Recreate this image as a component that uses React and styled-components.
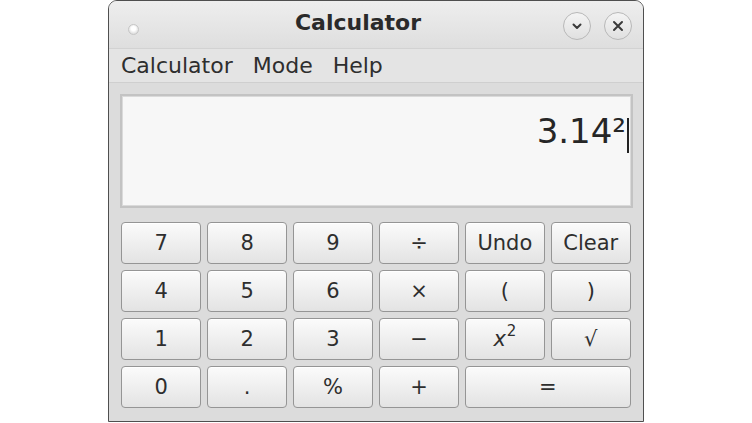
import React from "react";
import styled, { createGlobalStyle } from "styled-components";

const GlobalStyle = createGlobalStyle`
  html, body {
    margin: 0;
    padding: 0;
    background: #ffffff;
  }
  body {
    font-family: "DejaVu Sans", "Liberation Sans", sans-serif;
    color: #2e2e2e;
  }
`;

const KEYS = [
  { label: "7" },
  { label: "8" },
  { label: "9" },
  { label: "÷" },
  { label: "Undo" },
  { label: "Clear" },
  { label: "4" },
  { label: "5" },
  { label: "6" },
  { label: "×" },
  { label: "(" },
  { label: ")" },
  { label: "1" },
  { label: "2" },
  { label: "3" },
  { label: "−" },
  { label: "square" },
  { label: "√" },
  { label: "0" },
  { label: "." },
  { label: "%" },
  { label: "+" },
  { label: "=", wide: true },
];

const App = () => {
  return (
    <Page>
      <GlobalStyle />
      <Window>
        <TitleBar>
          <TitleLeft>
            <Dot />
          </TitleLeft>
          <Title>Calculator</Title>
          <TitleRight>
            <RoundButton aria-label="minimize">
              <svg width="14" height="14" viewBox="0 0 14 14">
                <path d="M3.5 5.5 L7 9 L10.5 5.5" fill="none" stroke="#3a3a3a" strokeWidth="2" strokeLinecap="round" strokeLinejoin="round" />
              </svg>
            </RoundButton>
            <RoundButton aria-label="close">
              <svg width="14" height="14" viewBox="0 0 14 14">
                <path d="M3 3 L11 11 M11 3 L3 11" fill="none" stroke="#3a3a3a" strokeWidth="2" strokeLinecap="round" />
              </svg>
            </RoundButton>
          </TitleRight>
        </TitleBar>

        <MenuBar>
          <MenuItem>Calculator</MenuItem>
          <MenuItem>Mode</MenuItem>
          <MenuItem>Help</MenuItem>
        </MenuBar>

        <Body>
          <Display>
            <Value>3.14²</Value>
            <Cursor />
          </Display>

          <Keypad>
            {KEYS.map((k, i) => (
              <Key key={i} $wide={k.wide}>
                {k.label === "square" ? (
                  <>
                    <Italic>x</Italic>
                    <Sup>2</Sup>
                  </>
                ) : (
                  k.label
                )}
              </Key>
            ))}
          </Keypad>
        </Body>
      </Window>
    </Page>
  );
};

const Page = styled.div`
  display: flex;
  justify-content: center;
  width: 752px;
  height: 423px;
  overflow: hidden;
`;

const Window = styled.div`
  width: 536px;
  height: 422px;
  box-sizing: border-box;
  border: 1px solid #4f4f4f;
  border-radius: 9px 9px 0 0;
  background: #dcdcdc;
  display: flex;
  flex-direction: column;
  overflow: hidden;
`;

const TitleBar = styled.div`
  height: 47px;
  flex-shrink: 0;
  display: flex;
  align-items: center;
  background: linear-gradient(#eeeeee, #dedede);
`;

const TitleLeft = styled.div`
  width: 43px;
  display: flex;
  padding-left: 19px;
  padding-top: 10px;
  box-sizing: border-box;
`;

const Dot = styled.div`
  width: 11px;
  height: 11px;
  border-radius: 50%;
  background: radial-gradient(circle at 50% 40%, #ffffff 30%, #dadada 80%);
  border: 1px solid #c6c6c6;
  box-sizing: border-box;
`;

const Title = styled.div`
  flex: 1;
  text-align: center;
  font-size: 22px;
  font-weight: bold;
  color: #2a2a2a;
  margin-top: -4px;
`;

const TitleRight = styled.div`
  width: 80px;
  display: flex;
  gap: 13px;
  margin-left: -1px;
  padding-top: 2px;
`;

const RoundButton = styled.div`
  width: 28px;
  height: 28px;
  box-sizing: border-box;
  border-radius: 50%;
  border: 1px solid #b8b8b8;
  background: linear-gradient(#f4f4f4, #e0e0e0);
  display: flex;
  align-items: center;
  justify-content: center;
`;

const MenuBar = styled.div`
  height: 35px;
  flex-shrink: 0;
  display: flex;
  align-items: center;
  padding-left: 2px;
  background: #e4e4e4;
  border-top: 1px solid #d2d2d2;
  border-bottom: 1px solid #cfcfcf;
  box-sizing: border-box;
`;

const MenuItem = styled.div`
  font-size: 22px;
  padding: 0 10px;
  color: #2e2e2e;
`;

const Body = styled.div`
  flex: 1;
  padding: 11px 10px 13px 11px;
  display: flex;
  flex-direction: column;
`;

const Display = styled.div`
  height: 114px;
  box-sizing: border-box;
  border: 2px solid #c3c3c3;
  box-shadow: inset 0 0 0 1px #dadada;
  background: #f7f7f7;
  display: flex;
  justify-content: flex-end;
  align-items: flex-start;
  padding: 15px 2px 0 0;
`;

const Value = styled.div`
  font-size: 34px;
  line-height: 41px;
  color: #262626;
`;

const Cursor = styled.div`
  width: 2px;
  height: 35px;
  margin-top: 7px;
  margin-left: 1px;
  background: #222;
`;

const Keypad = styled.div`
  margin: 14px 2px 0 1px;
  display: grid;
  grid-template-columns: repeat(6, 1fr);
  grid-auto-rows: 42px;
  column-gap: 5.5px;
  row-gap: 6px;
`;

const Key = styled.div`
  grid-column: ${(p) => (p.$wide ? "span 2" : "span 1")};
  box-sizing: border-box;
  border: 1px solid #959595;
  border-radius: 4px;
  background: linear-gradient(#fbfbfb, #e3e3e3);
  box-shadow: inset 0 1px 0 #ffffff;
  display: flex;
  align-items: center;
  justify-content: center;
  font-size: 21px;
  color: #2e2e2e;
`;

const Italic = styled.span`
  font-style: italic;
`;

const Sup = styled.span`
  font-size: 15px;
  position: relative;
  top: -8px;
  margin-left: 1px;
`;

export default App;
